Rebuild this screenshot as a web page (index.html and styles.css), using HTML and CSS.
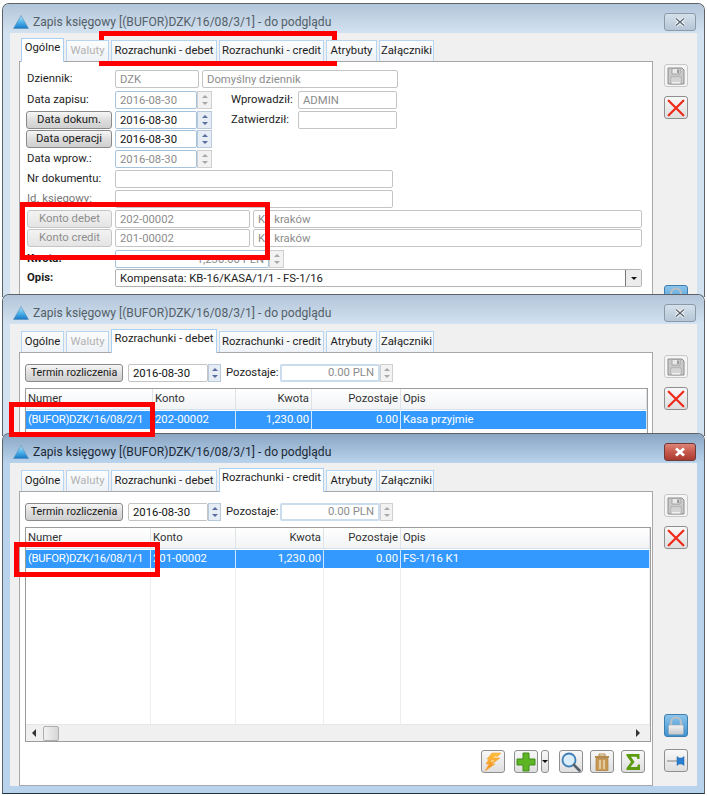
FILE: index.html
```html
<!DOCTYPE html>
<html lang="pl">
<head>
<meta charset="utf-8">
<title>Zapis księgowy</title>
<link rel="stylesheet" href="styles.css">
</head>
<body>
<svg class="defs" width="0" height="0" aria-hidden="true">
  <defs>
    <linearGradient id="logoG" x1="0" y1="0" x2="0" y2="1"><stop offset="0" stop-color="#b8e4f8"/><stop offset=".5" stop-color="#4fb4ea"/><stop offset="1" stop-color="#1678c8"/></linearGradient>
    <linearGradient id="bolt" x1="0" y1="0" x2="0" y2="1"><stop offset="0" stop-color="#ffc040"/><stop offset="1" stop-color="#f08a1e"/></linearGradient>
    <linearGradient id="lockG" x1="0" y1="0" x2="0" y2="1"><stop offset="0" stop-color="#f2f3f4"/><stop offset="1" stop-color="#c4c8cc"/></linearGradient>
    <symbol id="i-logo" viewBox="0 0 16 14"><path d="M8 .5 15.5 13.5H.5Z" fill="url(#logoG)" stroke="#5d8fb5" stroke-width=".6"/></symbol>
    <symbol id="i-save" viewBox="0 0 20 20"><path d="M2 2H16L18 4V18H2Z" fill="#c9c9c9" stroke="#8e8e8e"/><path d="M6 2.500H14V8H6Z" fill="#e9e9e9" stroke="#9a9a9a" stroke-width=".8"/><path d="M11 3.500H13V7H11Z" fill="#9a9a9a"/><path d="M5 11H15V18H5Z" fill="#f1f1f1" stroke="#a0a0a0" stroke-width=".8"/><path d="M6 13H14M6 15H14" stroke="#b5b5b5"/></symbol>
    <symbol id="i-x" viewBox="0 0 16 16"><path d="M1.500 1.500 14.500 14.500M14.500 1.500 1.500 14.500" stroke="#ee2a1a" stroke-width="2" stroke-linecap="round"/></symbol>
    <symbol id="i-close" viewBox="0 0 12 10"><path d="M2 1.500 10 8.500M10 1.500 2 8.500" stroke="#fff" stroke-width="3"/><path d="M2 1.500 10 8.500M10 1.500 2 8.500" stroke="#5a6672" stroke-width="1.400"/></symbol>
    <symbol id="i-close-on" viewBox="0 0 12 10"><path d="M2 1.500 10 8.500M10 1.500 2 8.500" stroke="#fff" stroke-width="2.800"/></symbol>
    <symbol id="i-lock" viewBox="0 0 20 20"><path d="M5 10V6.500a5 5 0 0 1 10 0V10" fill="none" stroke="#b9bfc5" stroke-width="2.200"/><rect x="2.500" y="9" width="15" height="9.500" rx="1.200" fill="url(#lockG)" stroke="#9aa2a8" stroke-width=".6"/></symbol>
    <symbol id="i-pin" viewBox="0 0 20 16"><path d="M1 8H11" stroke="#9a9a9a" stroke-width="1.300"/><path d="M11 3.500 13 5H16L18 3.500V12.500L16 11H13L11 12.500Z" fill="#2a7fd0" stroke="#1f5f9f" stroke-width=".5"/></symbol>
    <symbol id="i-bolt" viewBox="0 0 20 20"><path d="M9 1H18L13 6H17L9 12H12L2 19 6 12H3L6 7H4Z" fill="url(#bolt)" stroke="#f6a93a" stroke-width=".6"/><path d="M11 5H14M8 9H11" stroke="#fff3cf"/></symbol>
    <symbol id="i-plus" viewBox="0 0 20 20"><path d="M7 1H13V7H19V13H13V19H7V13H1V7H7Z" fill="#5eb524" stroke="#3f8c16"/></symbol>
    <symbol id="i-find" viewBox="0 0 20 20"><circle cx="8" cy="8" r="6.500" fill="#d9edfb" stroke="#3f7fb5" stroke-width="1.800"/><path d="M13 13 18.500 18.500" stroke="#55606a" stroke-width="2.600" stroke-linecap="round"/></symbol>
    <symbol id="i-trash" viewBox="0 0 20 20"><path d="M7 2H13V4H7Z" fill="none" stroke="#b58a4a"/><path d="M3 4H17V6H3Z" fill="#b58a4a"/><path d="M4 6.500H16V18.500H4Z" fill="#c89a55" stroke="#a87c3c" stroke-width=".7"/><path d="M8 8V17M12 8V17" stroke="#f0dfc0" stroke-width="1.400"/></symbol>
    <symbol id="i-sigma" viewBox="0 0 20 20"><path d="M3.500 2H16.500V7H14.500L13.500 4.800H8L11.500 10 7.500 15H14L15 12.500H17V18H3.500V16L8 10 3.500 3.800Z" fill="#5c9a10"/></symbol>
  </defs>
</svg>

<section class="window win-a">
  <header class="titlebar">
    <svg class="logo"><use href="#i-logo"/></svg>
    <span class="title">Zapis księgowy [(BUFOR)DZK/16/08/3/1] - do podglądu</span>
    <span class="close"><svg class="close-x"><use href="#i-close"/></svg></span>
  </header>
  <div class="client">
    <div class="main">
      <nav class="tabs">
        <span class="tab t-og active">Ogólne</span>
        <span class="tab t-wa off">Waluty</span>
        <span class="tab t-de">Rozrachunki - debet</span>
        <span class="tab t-cr">Rozrachunki - credit</span>
        <span class="tab t-at">Atrybuty</span>
        <span class="tab t-za">Załączniki</span>
      </nav>
      <div class="panel form-panel">
        <div class="row"><label class="lbl">Dziennik:</label><span class="fld dim f-code">DZK</span><span class="fld dim f-name">Domyślny dziennik</span></div>
        <div class="row r-gap3"><label class="lbl">Data zapisu:</label><span class="date dis"><span class="fld dim f-date">2016-08-30</span><span class="spin"><i class="up"></i><i class="dn"></i></span></span><label class="lbl2">Wprowadził:</label><span class="fld dim f-user">ADMIN</span></div>
        <div class="row"><span class="btn b-lbl">Data dokum.</span><span class="date"><span class="fld f-date">2016-08-30</span><span class="spin on"><i class="up"></i><i class="dn"></i></span></span><label class="lbl2">Zatwierdził:</label><span class="fld f-user"></span></div>
        <div class="row r-tight"><span class="btn b-lbl">Data operacji</span><span class="date"><span class="fld f-date">2016-08-30</span><span class="spin on"><i class="up"></i><i class="dn"></i></span></span></div>
        <div class="row"><label class="lbl">Data wprow.:</label><span class="date dis"><span class="fld dim f-date">2016-08-30</span><span class="spin"><i class="up"></i><i class="dn"></i></span></span></div>
        <div class="row"><label class="lbl">Nr dokumentu:</label><span class="fld f-doc"></span></div>
        <div class="row"><label class="lbl muted">Id. księgowy:</label><span class="fld f-doc"></span></div>
        <div class="row"><span class="btn off b-k">Konto debet</span><span class="fld dim f-acc">202-00002</span><span class="fld dim f-long">K1 kraków</span></div>
        <div class="row r-tight"><span class="btn off b-k">Konto credit</span><span class="fld dim f-acc">201-00002</span><span class="fld dim f-long">K1 kraków</span></div>
        <div class="row r-gap3"><label class="lbl bold">Kwota:</label><span class="date dis"><span class="fld dim f-amt">1,230.00 PLN</span><span class="spin"><i class="up"></i><i class="dn"></i></span></span></div>
        <div class="row r-tight"><label class="lbl bold">Opis:</label><span class="fld f-opis">Kompensata: KB-16/KASA/1/1 - FS-1/16<span class="drop"><i class="dn"></i></span></span></div>
      </div>
    </div>
    <aside class="side">
      <span class="tool ghost"><svg class="ico"><use href="#i-save"/></svg></span>
      <span class="tool"><svg class="ico"><use href="#i-x"/></svg></span>
      <span class="side-fill"></span>
      <span class="tool lock"><svg class="ico"><use href="#i-lock"/></svg></span>
    </aside>
  </div>
</section>

<section class="window win-b">
  <header class="titlebar">
    <svg class="logo"><use href="#i-logo"/></svg>
    <span class="title">Zapis księgowy [(BUFOR)DZK/16/08/3/1] - do podglądu</span>
    <span class="close"><svg class="close-x"><use href="#i-close"/></svg></span>
  </header>
  <div class="client">
    <div class="main">
      <nav class="tabs">
        <span class="tab t-og">Ogólne</span>
        <span class="tab t-wa off">Waluty</span>
        <span class="tab t-de active">Rozrachunki - debet</span>
        <span class="tab t-cr">Rozrachunki - credit</span>
        <span class="tab t-at">Atrybuty</span>
        <span class="tab t-za">Załączniki</span>
      </nav>
      <div class="panel list-panel">
        <div class="filter">
          <span class="btn b-term">Termin rozliczenia</span>
          <span class="date"><span class="fld f-date2">2016-08-30</span><span class="spin on"><i class="up"></i><i class="dn"></i></span></span>
          <label class="lbl3">Pozostaje:</label>
          <span class="date dis"><span class="fld dim f-rest">0.00 PLN</span><span class="spin"><i class="up"></i><i class="dn"></i></span></span>
        </div>
        <div class="grid grid-b">
          <div class="g-row g-head"><span>Numer</span><span>Konto</span><span class="num">Kwota</span><span class="num">Pozostaje</span><span>Opis</span></div>
          <div class="g-row g-sel"><span>(BUFOR)DZK/16/08/2/1</span><span>202-00002</span><span class="num">1,230.00</span><span class="num">0.00</span><span>Kasa przyjmie</span></div>
        </div>
      </div>
    </div>
    <aside class="side">
      <span class="tool ghost"><svg class="ico"><use href="#i-save"/></svg></span>
      <span class="tool"><svg class="ico"><use href="#i-x"/></svg></span>
    </aside>
  </div>
</section>

<section class="window win-c">
  <header class="titlebar">
    <svg class="logo"><use href="#i-logo"/></svg>
    <span class="title">Zapis księgowy [(BUFOR)DZK/16/08/3/1] - do podglądu</span>
    <span class="close"><svg class="close-x"><use href="#i-close-on"/></svg></span>
  </header>
  <div class="client">
    <div class="main">
      <nav class="tabs">
        <span class="tab t-og">Ogólne</span>
        <span class="tab t-wa off">Waluty</span>
        <span class="tab t-de">Rozrachunki - debet</span>
        <span class="tab t-cr active">Rozrachunki - credit</span>
        <span class="tab t-at">Atrybuty</span>
        <span class="tab t-za">Załączniki</span>
      </nav>
      <div class="panel list-panel">
        <div class="filter">
          <span class="btn b-term">Termin rozliczenia</span>
          <span class="date"><span class="fld f-date2">2016-08-30</span><span class="spin on"><i class="up"></i><i class="dn"></i></span></span>
          <label class="lbl3">Pozostaje:</label>
          <span class="date dis"><span class="fld dim f-rest">0.00 PLN</span><span class="spin"><i class="up"></i><i class="dn"></i></span></span>
        </div>
        <div class="grid grid-c">
          <div class="g-row g-head"><span>Numer</span><span>Konto</span><span class="num">Kwota</span><span class="num">Pozostaje</span><span>Opis</span></div>
          <div class="g-row g-sel"><span>(BUFOR)DZK/16/08/1/1</span><span>201-00002</span><span class="num">1,230.00</span><span class="num">0.00</span><span>FS-1/16 K1</span></div>
          <div class="g-row g-fill"><span></span><span></span><span></span><span></span><span></span></div>
          <div class="hscroll"><i class="arr-l"></i><span class="thumb"></span><i class="arr-r"></i></div>
        </div>
        <div class="actions">
          <span class="tool act"><svg class="ico"><use href="#i-bolt"/></svg></span>
          <span class="tool act gap-l"><svg class="ico"><use href="#i-plus"/></svg></span>
          <span class="tool mini"><i class="dn"></i></span>
          <span class="tool act gap-m"><svg class="ico"><use href="#i-find"/></svg></span>
          <span class="tool act"><svg class="ico"><use href="#i-trash"/></svg></span>
          <span class="tool act"><svg class="ico"><use href="#i-sigma"/></svg></span>
        </div>
      </div>
    </div>
    <aside class="side">
      <span class="tool ghost"><svg class="ico"><use href="#i-save"/></svg></span>
      <span class="tool"><svg class="ico"><use href="#i-x"/></svg></span>
      <span class="side-fill"></span>
      <span class="tool lock"><svg class="ico"><use href="#i-lock"/></svg></span>
      <span class="tool pin"><svg class="ico"><use href="#i-pin"/></svg></span>
    </aside>
  </div>
</section>

<span class="mark m1"></span>
<span class="mark m2"></span>
<span class="mark m3"></span>
<span class="mark m4"></span>
</body>
</html>
```
FILE: styles.css
```css
* { box-sizing: border-box; }
html, body { margin: 0; height: 796px; overflow: hidden; background: #fff; }
body { position: relative; font: 11.3px/16px Roboto, "Open Sans", sans-serif; color: #222; }
.defs { position: absolute; }

/* free-floating desktop windows */
.window { position: absolute; left: 2px; width: 703px; display: flex; flex-direction: column; overflow: hidden;
  border: 1px solid #5c6268; border-bottom: 0; border-radius: 7px 7px 0 0; background: #d3e2f0; }
.win-a { top: 3px; height: 294px; }
.win-b { top: 294px; height: 142px; }
.win-c { top: 433px; height: 361px; border-bottom: 1px solid #20343f; background: #b9d3ec; }

.titlebar { flex: none; height: 29px; display: flex; align-items: center; padding: 6px 7px 0 8px;
  background: linear-gradient(#b2c5d9, #d3e2f0); }
.win-c .titlebar { background: linear-gradient(#8aa6c4, #b9d3ec); }
.logo { width: 16px; height: 14px; margin-left: 2px; margin-right: 4px; }
.title { flex: 1; font-size: 12.1px; color: #555f68; white-space: nowrap; }
.win-c .title { color: #1d2a36; }
.close { width: 32px; height: 18px; margin-right: 1px; border: 1px solid #8b9aa8; border-radius: 3px;
  display: flex; align-items: center; justify-content: center; background: linear-gradient(#d5e0ea, #b6c6d6); }
.win-c .close { border-color: #6f3a34; background: linear-gradient(#dd8478 0, #c6584b 50%, #a83a2f 100%); }
.close-x { width: 12px; height: 10px; }

.client { flex: 1; min-height: 0; display: flex; margin: 0 7px; padding: 0 0 0 9px; background: #f0f0f0; }
.win-c .client { margin-bottom: 7px; }
.main { width: 634px; flex: none; display: flex; flex-direction: column; }

.tabs { flex: none; height: 28px; padding: 5px 0 0 2px; display: flex; gap: 2px; align-items: flex-end; position: relative; z-index: 1; }
.tab { height: 21px; line-height: 20px; text-align: center; color: #1c1c1c; white-space: nowrap;
  border: 1px solid #b5d5f2; border-bottom: 0; background: linear-gradient(#fcfcfc, #eef2f6); }
.tab.off { color: #b2b2b2; }
.tab.active { height: 24px; line-height: 18px; margin-bottom: -1px; background: #fff; border-color: #a9d0f2; }
.t-og { width: 43px; } .t-wa { width: 43px; } .t-de { width: 106px; } .t-cr { width: 105px; } .t-at { width: 51px; } .t-za { width: 55px; }

.panel { flex: 1; min-height: 0; background: #fff; border: 1px solid #a8a8a8; display: flex; flex-direction: column; }
.form-panel { padding: 8px 0 0 7px; gap: 2px; }
.list-panel { padding: 11px 0 0 5px; }

/* form */
.row { flex: none; height: 18px; display: flex; align-items: center; }
.r-gap3 { margin-top: 1px; }
.r-tight { margin-top: -1px; }
.lbl { width: 88px; flex: none; margin-top: -1px; color: #1d1d1d; white-space: nowrap; }
.lbl.muted { color: #777; }
.lbl.bold { font-weight: 700; }
.lbl2 { width: 67px; flex: none; margin-left: 19px; margin-top: -1px; white-space: nowrap; }
.lbl3 { margin-left: 5px; width: 54px; flex: none; margin-top: -1px; white-space: nowrap; }
.fld { height: 18px; line-height: 17px; padding: 0 4px; display: block; flex: none; background: #fff; border: 1px solid #c4c4c4; border-radius: 2px;
  color: #111; white-space: nowrap; overflow: hidden; }
.fld.dim { color: #8c8c8c; }
.f-code { width: 84px; margin-right: 3px; }
.f-name { width: 196px; }
.f-date { width: 82px; border-color: #a6c3dd; }
.f-user { width: 99px; }
.f-doc { width: 278px; }
.f-acc { width: 135px; margin-right: 3px; }
.f-long { width: 389px; }
.f-amt { width: 154px; text-align: right; border-color: #a6c3dd; }
.f-opis { width: 527px; position: relative; border-color: #b4b4b4; color: #222; }
.date { display: flex; flex: none; }
.spin { width: 15px; height: 18px; flex: none; border: 1px solid #cfcfcf; background: #f2f2f2; display: flex; flex-direction: column; align-items: center; justify-content: space-around; padding: 1px 0; }
.spin.on { border-color: #b7c9db; background: #e6edf5; }
.filter .spin { width: 13px; }
.up, .dn { display: block; width: 0; height: 0; border-left: 3px solid transparent; border-right: 3px solid transparent; }
.up { border-bottom: 3px solid #a8a8a8; }
.dn { border-top: 3px solid #a8a8a8; }
.spin.on .up { border-bottom-color: #5a6fa0; }
.spin.on .dn { border-top-color: #5a6fa0; }
.drop { position: absolute; right: 0; top: 0; width: 16px; height: 16px; background: #ececec; border-left: 1px solid #777; display: flex; align-items: center; justify-content: center; }
.drop .dn, .mini .dn { border-top-color: #111; }

.btn { flex: none; height: 18px; line-height: 15px; text-align: center; border: 1px solid #8a8a8a; border-radius: 3px; color: #1a1a1a;
  background: linear-gradient(#f6f6f6, #dcdcdc 55%, #cfcfcf); white-space: nowrap; }
.b-lbl { width: 86px; margin-left: -1px; margin-right: 3px; }
.btn.off { color: #8e8e8e; border-color: #c6c6c6; background: linear-gradient(#f3f3f3, #e4e4e4); }
.b-k { width: 85px; margin-right: 3px; }
.b-term { width: 98px; margin-right: 5px; font-size: 10.7px; }

/* list */
.filter { flex: none; height: 18px; display: flex; align-items: center; }
.f-date2 { width: 80px; color: #111; }
.f-rest { width: 100px; text-align: right; border: 2px solid #cbdcec; line-height: 14px; }
.grid { flex: none; border: 1px solid #9c9c9c; margin-top: 6px; display: flex; flex-direction: column; background: #fff; }
.grid-b { width: 623px; height: 60px; }
.grid-c { width: 626px; height: 215px; }
.g-row { display: grid; flex: none; }
.grid-b .g-row { grid-template-columns: 127px 83px 76px 89px 1fr; }
.grid-c .g-row { grid-template-columns: 125px 85px 88px 77px 1fr; }
.g-row > span { padding: 0 2px; white-space: nowrap; overflow: hidden; }
.g-row .num { text-align: right; }
.g-head { height: 21px; line-height: 20px; background: linear-gradient(#fff, #f1f3f5); border-bottom: 1px solid #d5e1ec; color: #333; }
.g-head > span { border-right: 1px solid #dfe3e7; }
.g-sel { height: 18px; line-height: 18px; margin-top: 1px; background: #3399ff; color: #fff; }
.g-sel > span { border-right: 1px solid #cfe6fc; }
.g-sel > span:first-child { letter-spacing: -.3px; }
.g-fill { flex: 1; min-height: 0; }
.g-fill > span { border-right: 1px solid #eeeeee; }
.hscroll { flex: none; height: 17px; background: #f0f0f0; border-top: 1px solid #e6e6e6; display: flex; align-items: center; padding: 0 10px 0 6px; }
.thumb { width: 16px; height: 15px; margin-left: 7px; border: 1px solid #adadad; border-radius: 2px; background: linear-gradient(90deg, #f2f2f2, #d6d6d6); }
.arr-l { border-top: 4px solid transparent; border-bottom: 4px solid transparent; border-right: 4px solid #333; }
.arr-r { margin-left: auto; border-top: 4px solid transparent; border-bottom: 4px solid transparent; border-left: 4px solid #333; }

.actions { flex: none; display: flex; gap: 7px; justify-content: flex-end; margin-top: 8px; padding-right: 7px; }
.tool { flex: none; width: 24px; height: 23px; border: 1px solid #8f8f8f; border-radius: 3px; display: flex; align-items: center; justify-content: center;
  background: linear-gradient(#f8f8f8, #dedede); }
.ico { width: 18px; height: 18px; display: block; }
.act .ico { width: 20px; height: 20px; }
.gap-l { margin-left: 2px; }
.gap-m { margin-left: 3px; }
.mini { width: 8px; margin-left: -4px; }

.side { flex: none; width: 43px; padding: 0 0 0 11px; display: flex; flex-direction: column; gap: 9px; }
.side .tool:first-child { margin-top: 31px; }
.ghost { border-color: #c8c8c8; background: #f5f5f5; }
.ghost .ico { width: 20px; height: 20px; }
.side-fill { flex: none; height: 148px; }
.win-c .side-fill { height: 147px; }
.side .lock { border-color: #3f7fb0; background: linear-gradient(#8cc4ea, #3d93d2); flex: none; }
.side .lock .ico { width: 20px; height: 20px; }
.pin { margin-top: 3px; }
.pin .ico { width: 20px; height: 16px; }

/* red annotation frames laid over the screenshot */
.mark { position: absolute; border: 5px solid #f00; pointer-events: none; }
.m1 { left: 99px; top: 31px; width: 238px; height: 35px; }
.m2 { left: 20px; top: 202px; width: 250px; height: 58px; }
.m3 { left: 9px; top: 402px; width: 146px; height: 35px; }
.m4 { left: 14px; top: 542px; width: 146px; height: 35px; }
```
